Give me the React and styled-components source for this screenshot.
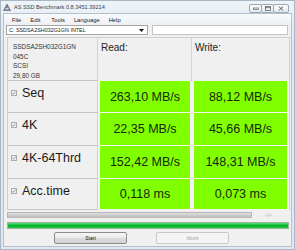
import React from "react";
import styled, { createGlobalStyle } from "styled-components";

const GlobalStyle = createGlobalStyle`
  html, body {
    margin: 0;
    padding: 0;
    background: #dfe7f0;
  }
  * {
    box-sizing: border-box;
  }
`;

const rows = [
  { name: "Seq", read: "263,10 MB/s", write: "88,12 MB/s", h: 32 },
  { name: "4K", read: "22,35 MB/s", write: "45,66 MB/s", h: 33 },
  { name: "4K-64Thrd", read: "152,42 MB/s", write: "148,31 MB/s", h: 33 },
  { name: "Acc.time", read: "0,118 ms", write: "0,073 ms", h: 31 },
];

const menu = ["File", "Edit", "Tools", "Language", "Help"];

function CheckBox() {
  return (
    <svg width="6" height="6" viewBox="0 0 6 6">
      <rect x="0.5" y="0.5" width="5" height="5" fill="#efefef" stroke="#ababab" />
      <path d="M1.5 3 L2.6 4.2 L4.6 1.6" fill="none" stroke="#9a9a9a" strokeWidth="0.9" />
    </svg>
  );
}

function App() {
  return (
    <Window>
      <GlobalStyle />
      <TitleBar>
        <svg width="8" height="8" viewBox="0 0 8 8">
          <path d="M0.5 7.5 L4 1 L7.5 7.5 Z" fill="#7d8896" stroke="#4f5966" strokeWidth="0.6" />
          <rect x="2.5" y="5" width="3" height="1.5" fill="#d0d6de" />
        </svg>
        <Title>AS SSD Benchmark 0.8.3451.39214</Title>
        <Controls>
          <CtrlButton $w={13}>
            <svg width="6" height="4" viewBox="0 0 6 4">
              <rect x="0.5" y="2" width="5" height="1.5" fill="none" stroke="#555" strokeWidth="0.6" />
            </svg>
          </CtrlButton>
          <CtrlButton $w={13}>
            <svg width="6" height="5" viewBox="0 0 6 5">
              <rect x="0.5" y="0.5" width="5" height="4" fill="none" stroke="#555" strokeWidth="0.7" />
              <line x1="0.5" y1="1.6" x2="5.5" y2="1.6" stroke="#555" strokeWidth="0.7" />
            </svg>
          </CtrlButton>
          <CtrlButton $w={16}>
            <svg width="6" height="5" viewBox="0 0 6 5">
              <path d="M0.8 0.5 L5.2 4.5 M5.2 0.5 L0.8 4.5" stroke="#555" strokeWidth="0.9" />
            </svg>
          </CtrlButton>
        </Controls>
      </TitleBar>

      <Client>
        <MenuBar>
          {menu.map((m) => (
            <MenuItem key={m}>{m}</MenuItem>
          ))}
        </MenuBar>

        <ToolRow>
          <Combo>
            <span>C: SSDSA2SH032G1GN INTEL</span>
            <svg width="5" height="3" viewBox="0 0 5 3">
              <path d="M0 0 L5 0 L2.5 3 Z" fill="#111" />
            </svg>
          </Combo>
          <TextField />
        </ToolRow>

        <Grid>
          <InfoCell>
            <div>SSDSA2SH032G1GN</div>
            <div>045C</div>
            <div>SCSI</div>
            <div>29,80 GB</div>
          </InfoCell>
          <HeadCell>Read:</HeadCell>
          <HeadCell $last>Write:</HeadCell>

          {rows.map((r) => (
            <React.Fragment key={r.name}>
              <LabelCell $h={r.h}>
                <CheckBox />
                <span>{r.name}</span>
              </LabelCell>
              <ValueCell $h={r.h}>
                <Value>{r.read}</Value>
              </ValueCell>
              <ValueCell $h={r.h} $last>
                <Value>{r.write}</Value>
              </ValueCell>
            </React.Fragment>
          ))}
        </Grid>

        <ProgressRow>
          <GrayBar />
          <SmallText>-/-/-</SmallText>
        </ProgressRow>
        <GreenBar />

        <ButtonRow>
          <Button>Start</Button>
          <Button $disabled>Abort</Button>
        </ButtonRow>
      </Client>
    </Window>
  );
}

export default App;

const Window = styled.div`
  width: 295px;
  height: 250px;
  display: flex;
  flex-direction: column;
  background: linear-gradient(#eef3f8, #dfe7f0 40px);
  border: 1px solid #a9b6c4;
  font-family: "Liberation Sans", Arial, sans-serif;
`;

const TitleBar = styled.div`
  height: 12px;
  display: flex;
  align-items: center;
  padding: 0 0 0 2px;
  gap: 3px;
`;

const Title = styled.div`
  font-size: 5.6px;
  color: #3a3f46;
  flex: 1;
`;

const Controls = styled.div`
  display: flex;
  margin-right: 5px;
  margin-top: 2px;
`;

const CtrlButton = styled.div`
  width: ${(p) => p.$w}px;
  height: 9px;
  display: flex;
  align-items: center;
  justify-content: center;
  border: 1px solid #9aa7b6;
  margin-left: -1px;
  background: linear-gradient(#fbfcfd, #e2e8ef);
  border-radius: 2px;
`;

const Client = styled.div`
  flex: 1;
  margin: 0 2px 2px;
  background: #f0f0f0;
  border: 1px solid #b5c0cc;
  display: flex;
  flex-direction: column;
  padding: 0 2px 0 2px;
`;

const MenuBar = styled.div`
  height: 11px;
  display: flex;
  align-items: center;
  gap: 9px;
  background: linear-gradient(#f7f9fb, #eef1f4);
  margin: 0 -2px;
  padding-left: 8px;
`;

const MenuItem = styled.span`
  font-size: 5.8px;
  color: #222;
  &:nth-child(3) {
    margin-left: 2px;
  }
`;

const ToolRow = styled.div`
  display: flex;
  gap: 4px;
  height: 10px;
  margin-bottom: 2px;
`;

const Combo = styled.div`
  width: 142px;
  height: 10px;
  background: #fff;
  border: 1px solid #a5a5a5;
  display: flex;
  align-items: center;
  justify-content: space-between;
  padding: 0 3px 0 2px;
  font-size: 5.4px;
  color: #222;
`;

const TextField = styled.div`
  width: 136px;
  height: 10px;
  background: #fff;
  border: 1px solid #c4c4c4;
`;

const Grid = styled.div`
  display: grid;
  grid-template-columns: 90px 94px 98px;
  margin-left: 1px;
  width: 283px;
  border-top: 1px solid #cfcfcf;
  border-left: 1px solid #cfcfcf;
`;

const InfoCell = styled.div`
  height: 43px;
  padding: 4px 0 0 5px;
  font-size: 6.4px;
  line-height: 9.5px;
  color: #333;
  border-right: 1px solid #d2d2d2;
  border-bottom: 1px solid #c6c6c6;
`;

const HeadCell = styled.div`
  height: 43px;
  padding: 4px 0 0 3px;
  font-size: 10px;
  color: #222;
  border-right: 1px solid ${(p) => (p.$last ? "#cfcfcf" : "#d6d6d6")};
`;

const LabelCell = styled.div`
  height: ${(p) => p.$h}px;
  display: flex;
  align-items: flex-start;
  gap: 5px;
  padding: 5px 0 0 3px;
  font-size: 12.5px;
  color: #1a1a1a;
  border-right: 1px solid #d2d2d2;
  border-bottom: 1px solid #c6c6c6;
  svg {
    margin-top: 4px;
  }
`;

const ValueCell = styled.div`
  height: ${(p) => p.$h}px;
  padding: 0 2px 1px 2px;
  background: #f4f2f8;
  border-right: ${(p) => (p.$last ? "1px solid #cfcfcf" : "none")};
`;

const Value = styled.div`
  height: 100%;
  background: #80ff00;
  display: flex;
  align-items: center;
  justify-content: center;
  font-size: 12.5px;
  color: #17290a;
`;

const ProgressRow = styled.div`
  display: flex;
  align-items: center;
  margin-top: 2px;
  margin-left: 1px;
  gap: 13px;
`;

const GrayBar = styled.div`
  width: 245px;
  height: 6px;
  border: 1px solid #b8b8b8;
  background: linear-gradient(#e2e2e2, #cdcdcd 50%, #c4c4c4);
`;

const SmallText = styled.span`
  font-size: 4.5px;
  color: #9a9a9a;
`;

const GreenBar = styled.div`
  margin: 4px 0 0 1px;
  width: 282px;
  height: 7px;
  border: 1px solid #9ab59e;
  background: linear-gradient(#5ee07a, #10c03a 40%, #06b025 60%, #2ccb4c);
`;

const ButtonRow = styled.div`
  display: flex;
  gap: 29px;
  margin-top: 3px;
  padding-left: 48px;
`;

const Button = styled.div`
  width: 73px;
  height: 12px;
  display: flex;
  align-items: center;
  justify-content: center;
  font-size: 5px;
  border-radius: 2px;
  color: ${(p) => (p.$disabled ? "#a6a6a6" : "#111")};
  border: 1px solid ${(p) => (p.$disabled ? "#c9c9c9" : "#8c8c8c")};
  background: ${(p) =>
    p.$disabled
      ? "#f4f4f4"
      : "linear-gradient(#f6f6f6, #e9e9e9 50%, #dcdcdc 51%, #d2d2d2)"};
`;
